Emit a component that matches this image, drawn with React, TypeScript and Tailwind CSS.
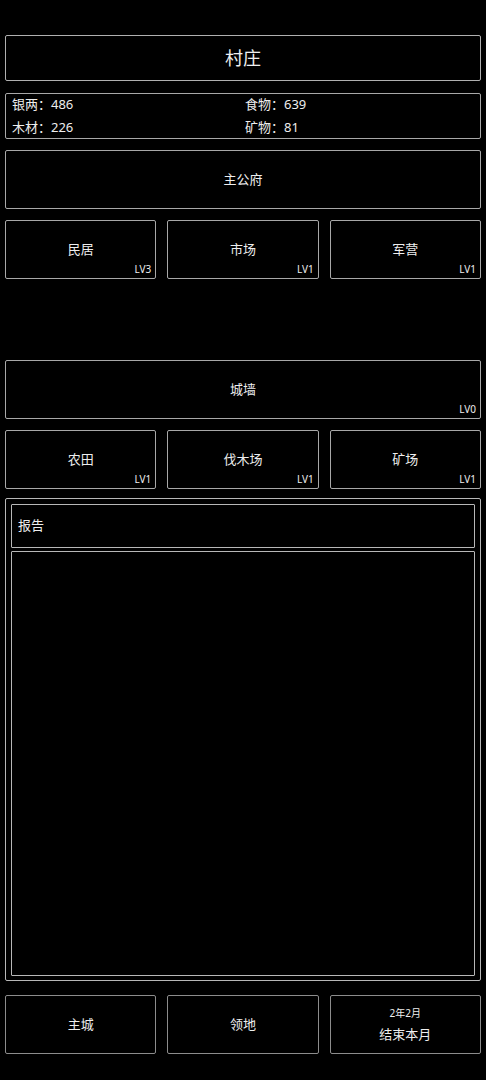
import React from 'react';

const font = { fontFamily: '"Noto Sans", "Noto Sans CJK SC", sans-serif' };

function Building({ name, level, wide, hidden }: { name: string; level?: string; wide?: boolean; hidden?: boolean }) {
  return (
    <div
      className={`relative h-[59px] rounded-[2px] flex items-center justify-center text-[13px] text-[#eeeeee] ${
        hidden ? 'border border-transparent' : 'border border-[#a8a8a8]'
      } ${wide ? 'w-full' : ''}`}
    >
      {!hidden && <span>{name}</span>}
      {!hidden && level && (
        <span className="absolute right-[4px] bottom-[4px] text-[10px] leading-none">{level}</span>
      )}
    </div>
  );
}

export default function App() {
  const row1 = [
    { name: '民居', level: 'LV3' },
    { name: '市场', level: 'LV1' },
    { name: '军营', level: 'LV1' },
  ];
  const row2 = [
    { name: '农田', level: 'LV1' },
    { name: '伐木场', level: 'LV1' },
    { name: '矿场', level: 'LV1' },
  ];

  return (
    <div className="w-[486px] h-[1080px] bg-black px-[5px] pt-[35px] flex flex-col" style={font}>
      <div className="h-[46px] border border-[#b0b0b0] rounded-[2px] flex items-center justify-center text-[18px] text-[#f0f0f0]">
        村庄
      </div>

      <div className="mt-[12px] h-[46px] border border-[#a8a8a8] rounded-[2px] px-[6px] grid grid-cols-2 content-center gap-y-[4px] text-[13px] text-[#eeeeee] leading-[19px]">
        <span>银两：486</span>
        <span className="pl-[2px]">食物：639</span>
        <span>木材：226</span>
        <span className="pl-[2px]">矿物：81</span>
      </div>

      <div className="mt-[11px]">
        <Building name="主公府" wide />
      </div>

      <div className="mt-[11px] grid grid-cols-3 gap-[11px]">
        {row1.map((b) => (
          <Building key={b.name} name={b.name} level={b.level} />
        ))}
      </div>

      <div className="mt-[11px] grid grid-cols-3 gap-[11px]">
        <Building name="" hidden />
        <Building name="" hidden />
        <Building name="" hidden />
      </div>

      <div className="mt-[11px]">
        <Building name="城墙" level="LV0" wide />
      </div>

      <div className="mt-[11px] grid grid-cols-3 gap-[11px]">
        {row2.map((b) => (
          <Building key={b.name} name={b.name} level={b.level} />
        ))}
      </div>

      <div className="mt-[9px] h-[483px] border border-[#b8b8b8] rounded-[2px] px-[5px] pt-[5px] pb-[4px] flex flex-col gap-[3px]">
        <div className="h-[44px] border border-[#b8b8b8] rounded-[1px] flex items-center px-[6px] text-[13px] text-[#eeeeee]">
          报告
        </div>
        <div className="flex-1 border border-[#b8b8b8] rounded-[1px]"></div>
      </div>

      <div className="mt-[14px] grid grid-cols-3 gap-[11px]">
        <div className="h-[59px] border border-[#8c8c8c] rounded-[2px] flex items-center justify-center text-[13px] text-[#eeeeee]">
          主城
        </div>
        <div className="h-[59px] border border-[#8c8c8c] rounded-[2px] flex items-center justify-center text-[13px] text-[#eeeeee]">
          领地
        </div>
        <div className="h-[59px] border border-[#8c8c8c] rounded-[2px] flex flex-col items-center justify-center text-[#eeeeee]">
          <span className="text-[10px] leading-[14px]">2年2月</span>
          <span className="text-[13px] leading-[18px] mt-[5px]">结束本月</span>
        </div>
      </div>
    </div>
  );
}
